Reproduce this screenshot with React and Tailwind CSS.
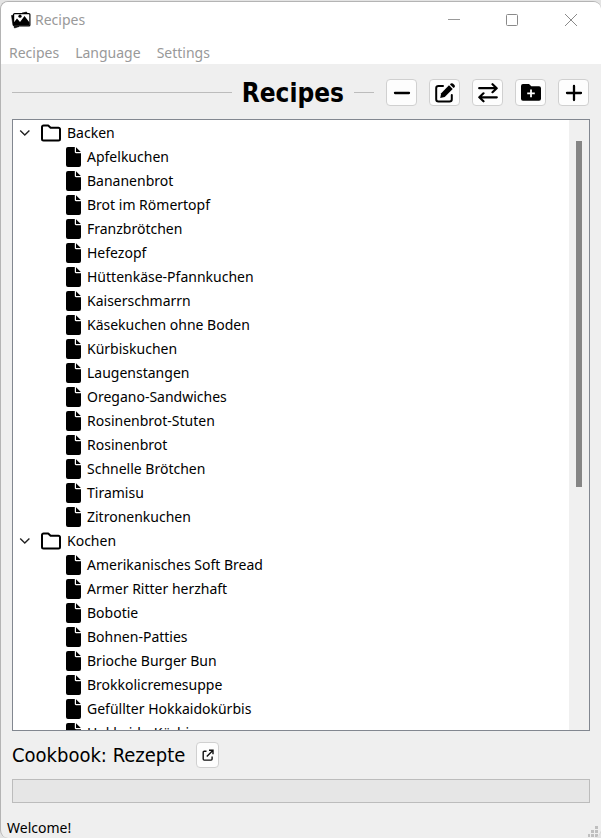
import React, { useState } from "react";

const folders = [
  {
    name: "Backen",
    recipes: [
      "Apfelkuchen", "Bananenbrot", "Brot im Römertopf", "Franzbrötchen", "Hefezopf",
      "Hüttenkäse-Pfannkuchen", "Kaiserschmarrn", "Käsekuchen ohne Boden", "Kürbiskuchen",
      "Laugenstangen", "Oregano-Sandwiches", "Rosinenbrot-Stuten", "Rosinenbrot",
      "Schnelle Brötchen", "Tiramisu", "Zitronenkuchen",
    ],
  },
  {
    name: "Kochen",
    recipes: [
      "Amerikanisches Soft Bread", "Armer Ritter herzhaft", "Bobotie", "Bohnen-Patties",
      "Brioche Burger Bun", "Brokkolicremesuppe", "Gefüllter Hokkaidokürbis", "Hokkaido-Kürbis",
    ],
  },
];

function AppIcon() {
  return (
    <svg width="20" height="18" viewBox="0 0 20 18" aria-hidden="true">
      <path d="M0.5 4.5 3 4v10L2 14.5zM11 2.2 15.5 1l.6 1.2zM3 15.5h5L3.5 17z" fill="#000" stroke="#000" strokeWidth=".6" />
      <rect x="2.6" y="2.6" width="16.3" height="12.3" rx="1" fill="#fff" stroke="#000" strokeWidth="1.2" />
      <circle cx="9" cy="5.2" r="1.6" />
      <path d="M3 14.5v-3.2L6 7.5l3 3.5 4.5-6 5 6.5v3z" />
    </svg>
  );
}

function FolderIcon() {
  return (
    <svg width="20" height="18" viewBox="0 0 20 18" fill="none" stroke="#000" strokeWidth="2" strokeLinejoin="round" aria-hidden="true">
      <path d="M1 15V3a1.5 1.5 0 0 1 1.5-1.5H7.2l2.4 2.3h7.9A1.5 1.5 0 0 1 19 5.3V15a1.5 1.5 0 0 1-1.5 1.5h-15A1.5 1.5 0 0 1 1 15z" />
    </svg>
  );
}

function FileIcon() {
  return (
    <svg width="15" height="20" viewBox="0 0 15 20" aria-hidden="true">
      <path d="M2 0h6.8v5c0 .7.5 1.2 1.2 1.2h5V18a2 2 0 0 1-2 2H2a2 2 0 0 1-2-2V2a2 2 0 0 1 2-2z" />
      <path d="M10 .2 14.8 5H10z" />
    </svg>
  );
}

const stroke = { fill: "none", stroke: "#000", strokeWidth: 2.3, strokeLinecap: "round", strokeLinejoin: "round" };

const tools = [
  { label: "Remove recipe", art: <path d="M3 10h14" {...stroke} /> },
  {
    label: "Edit recipe",
    art: (
      <>
        <path d="M8 3H3.5A2.3 2.3 0 0 0 1.2 5.3v11a2.3 2.3 0 0 0 2.3 2.3h11a2.3 2.3 0 0 0 2.3-2.3V12" {...stroke} strokeWidth="2" />
        <path d="M14 2.3 17.7 6 9.7 14 5.2 15 6.2 10.2z" />
        <path d="M15 1.4a2.2 2.2 0 0 1 2.9-.9l1.6 1.6a2.2 2.2 0 0 1-.9 2.9z" />
      </>
    ),
  },
  {
    label: "Swap recipes",
    art: <path d="M1.2 5.2h16.8M14.5 1.2l4.2 4-4.2 4M18.8 14.3H1.7M5.5 10.3l-4.2 4 4.2 4" {...stroke} strokeWidth="2.2" />,
  },
  {
    label: "Add folder",
    art: (
      <>
        <path d="M0 3a2 2 0 0 1 2-2h6l2.3 2.3H18a2 2 0 0 1 2 2v10.5a2 2 0 0 1-2 2H2a2 2 0 0 1-2-2z" />
        <path d="M6.2 10.4h7.6M10 6.6v7.6" stroke="#fff" strokeWidth="1.8" />
      </>
    ),
  },
  { label: "Add recipe", art: <path d="M3 10h14M10 3v14" {...stroke} /> },
];

function Folder({ name, recipes }) {
  const [open, setOpen] = useState(true);
  return (
    <li>
      <button
        type="button"
        aria-expanded={open}
        onClick={() => setOpen(!open)}
        className="flex h-6 w-full items-center pl-1.5 text-left"
      >
        <svg width="12" height="8" viewBox="0 0 12 8" fill="none" stroke="#222" strokeWidth="1.4" aria-hidden="true">
          <path d="M1.2 1.5 5.8 6 10.4 1.5" />
        </svg>
        <span className="ml-2.5 mr-1.5"><FolderIcon /></span>
        {name}
      </button>
      {open && (
        <ul>
          {recipes.map((recipe) => (
            <li key={recipe} className="flex h-6 items-center gap-1.5 pl-[53px]">
              <FileIcon />
              {recipe}
            </li>
          ))}
        </ul>
      )}
    </li>
  );
}

export default function App() {
  return (
    <div className="h-screen bg-[#e4e4e4] pt-px">
      <div className="flex h-full flex-col overflow-hidden rounded-lg border-l border-t border-[#b4b4b4] bg-[#efefef] font-['Noto_Sans',sans-serif] text-sm text-black">
        <header className="bg-white text-[#999999]">
          <div className="flex h-9 items-center pl-2.5">
            <AppIcon />
            <span className="ml-1">Recipes</span>
            <div className="ml-auto flex">
              <button type="button" aria-label="Minimize" className="flex w-[58px] justify-center">
                <svg width="12" height="12" viewBox="0 0 12 12" stroke="#999" fill="none"><path d="M0 5.5h12" /></svg>
              </button>
              <button type="button" aria-label="Maximize" className="flex w-[58px] justify-center">
                <svg width="12" height="12" viewBox="0 0 12 12" stroke="#8a8a8a" fill="none"><rect x=".5" y=".5" width="11" height="11" rx="1" /></svg>
              </button>
              <button type="button" aria-label="Close" className="flex w-[60px] justify-center">
                <svg width="12" height="12" viewBox="0 0 12 12" stroke="#8a8a8a" fill="none"><path d="M0 0 12 12M12 0 0 12" /></svg>
              </button>
            </div>
          </div>
          <nav className="flex h-[26px] items-end gap-4 pb-px pl-2">
            <button type="button">Recipes</button>
            <button type="button">Language</button>
            <button type="button">Settings</button>
          </nav>
        </header>

        <main className="flex min-h-0 flex-1 flex-col px-[11px]">
          <div className="flex h-[55px] shrink-0 items-center pt-0.5 pr-px">
            <span className="h-px flex-1 bg-[#bcbcbc]" />
            <h1 className="mx-2.5 font-['DejaVu_Sans_Condensed','DejaVu_Sans',sans-serif] text-[26px] font-bold leading-8">Recipes</h1>
            <span className="mr-3 h-px w-5 bg-[#bcbcbc]" />
            <div className="flex gap-3">
              {tools.map((tool) => (
                <button
                  key={tool.label}
                  type="button"
                  aria-label={tool.label}
                  className="flex h-[27px] w-[31px] items-center justify-center rounded border border-[#d0d0d0] bg-[#fdfdfd]"
                >
                  <svg width="20" height="20" viewBox="0 0 20 20" aria-hidden="true">{tool.art}</svg>
                </button>
              ))}
            </div>
          </div>

          <div className="flex min-h-0 flex-1 border border-[#828790] bg-white">
            <ul className="min-w-0 flex-1 overflow-hidden pt-px">
              {folders.map((folder) => (
                <Folder key={folder.name} {...folder} />
              ))}
            </ul>
            <div className="w-5 bg-[#f0f0f0] px-[7px] pt-[21px]">
              <div className="h-[346px] bg-[#858585]" />
            </div>
          </div>

          <div className="flex h-12 shrink-0 items-center gap-[11px]">
            <h2 className="font-['DejaVu_Sans_Condensed','DejaVu_Sans',sans-serif] text-xl">Cookbook: Rezepte</h2>
            <button type="button" aria-label="Open cookbook" className="flex h-[26px] w-[23px] items-center justify-center rounded border border-[#d0d0d0] bg-[#fdfdfd]">
              <svg width="12" height="12" viewBox="0 0 12 12" fill="none" stroke="#111" strokeWidth="1.4" aria-hidden="true">
                <path d="M4.5 2.2H2.2a1 1 0 0 0-1 1v6.9a1 1 0 0 0 1 1h6.9a1 1 0 0 0 1-1V7.5M7 1.2h4v4M10.8 1.4 4.8 7.4" />
              </svg>
            </button>
          </div>

          <progress
            aria-label="Progress"
            value="0"
            max="100"
            className="h-6 w-full shrink-0 appearance-none border border-[#bcbcbc] bg-[#e6e6e6] [&::-webkit-progress-bar]:bg-[#e6e6e6]"
          />
        </main>

        <footer className="flex h-[35px] shrink-0 items-end justify-between pl-1.5">
          <span role="status">Welcome!</span>
          <svg width="13" height="13" viewBox="0 0 13 13" fill="#bfbfbf" aria-hidden="true">
            <path d="M0 9h2v3H0zM3 9h3v3H3zM7 9h3v3H7zM3 5h3v3H3zM7 5h3v3H7zM7 1h3v3H7zM10 12l3-6v7h-3z" />
          </svg>
        </footer>
      </div>
    </div>
  );
}
